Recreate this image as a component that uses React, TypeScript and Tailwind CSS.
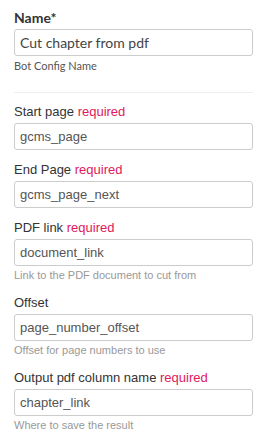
import React from 'react';

interface FieldProps {
    label: string;
    required?: boolean;
    value: string;
    help?: string;
}

function Field({ label, required, value, help }: FieldProps) {
    return (
        <div className="mb-[10px] font-['Liberation_Sans',Arial,sans-serif]">
            <div className="text-[13px] leading-[20px] text-[#333]">
                {label} {required && <span className="text-[#e0185c]">required</span>}
            </div>
            <div className="mt-[1px] h-[27px] w-full rounded-[3px] border border-[#ccc] flex items-center px-[5px] text-[13px] text-[#555]">
                {value}
            </div>
            {help && <div className="mt-[2px] text-[11px] leading-[15px] text-[#999]">{help}</div>}
        </div>
    );
}

export default function App() {
    return (
        <div className="w-[268px] bg-white pt-[8px] pl-[14px] pr-[15px]">
            <div className="font-['Lato',sans-serif]">
                <div className="text-[14px] leading-[20px] font-bold text-[#333]">Name*</div>
                <div className="mt-[1px] h-[27px] w-full rounded-[3px] border border-[#ccc] flex items-center px-[5px] text-[14px] text-[#444]">
                    Cut chapter from pdf
                </div>
                <div className="mt-[2px] text-[11px] leading-[15px] text-[#555]">Bot Config Name</div>
            </div>
            <div className="mt-[19px] mb-[9px] h-px bg-[#eee]" />
            <Field label="Start page" required value="gcms_page" />
            <Field label="End Page" required value="gcms_page_next" />
            <Field label="PDF link" required value="document_link" help="Link to the PDF document to cut from" />
            <Field label="Offset" value="page_number_offset" help="Offset for page numbers to use" />
            <Field label="Output pdf column name" required value="chapter_link" help="Where to save the result" />
        </div>
    );
}
